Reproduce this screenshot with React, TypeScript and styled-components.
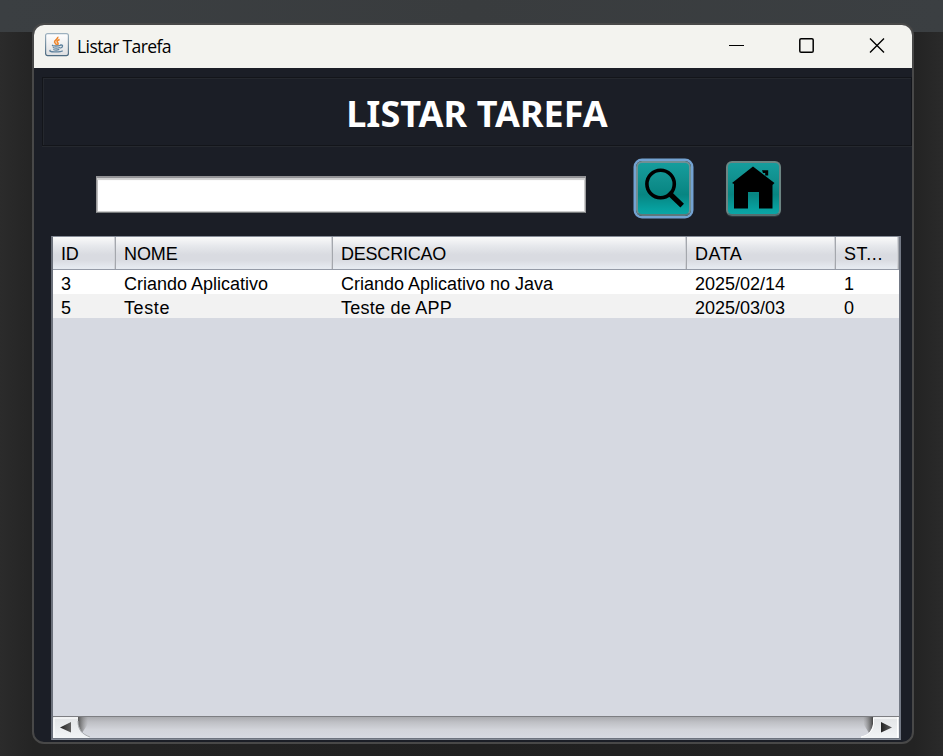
import React from 'react';
import styled, { createGlobalStyle } from 'styled-components';

const GlobalStyle = createGlobalStyle`
  * { box-sizing: border-box; }
  body { margin: 0; overflow: hidden; background: #272727; }
`;

const Desktop = styled.div`
  width: 943px;
  height: 756px;
  padding: 23px 0 0 32px;
  overflow: hidden;
  background-image:
    linear-gradient(90deg, #3b3f42, #393c3e 50%, #3b3f42),
    linear-gradient(90deg, #2b2b2b 0, #242424 34px, #202020 50%, #232323 914px, #2a2a2a 943px);
  background-size: 100% 32px, 100% 100%;
  background-repeat: no-repeat;
`;

const Window = styled.main`
  width: 882px;
  height: 721px;
  display: flex;
  flex-direction: column;
  border: 2px solid #484848;
  border-radius: 12px;
  overflow: hidden;
  background: #1b1e26;
`;

const TitleBar = styled.header`
  height: 43px;
  flex: none;
  display: flex;
  align-items: center;
  padding: 0 26px 4px 11px;
  background: #f3f3ef;
`;

const WindowTitle = styled.span`
  flex: 1;
  margin-left: 8px;
  padding-top: 2px;
  color: #000;
  font: 17.6px/24px 'Open Sans', 'Noto Sans', sans-serif;
  letter-spacing: -0.62px;
`;

const WindowControls = styled.div`
  display: flex;
  gap: 55px;
  padding-top: 1px;
  svg { display: block; }
  svg:first-child { margin-right: -1px; }
`;

const Heading = styled.div`
  height: 69px;
  flex: none;
  margin: 9px 0 0 8px;
  display: flex;
  justify-content: center;
  border: 1px solid #13151a;
  border-right-color: #12141a;
  box-shadow: inset 1px 1px 0 #25282e, 0 1px 0 #25282e;
  h1 {
    margin: 0;
    color: #fff;
    font: bold 36px/71px 'Noto Sans', 'Open Sans', sans-serif;
    letter-spacing: 0.05px;
    white-space: nowrap;
  }
`;

const SearchBar = styled.div`
  height: 90px;
  flex: none;
  display: flex;
  align-items: flex-start;
  padding: 13px 0 0 62px;
`;

const SearchInput = styled.input`
  width: 490px;
  height: 37px;
  margin: 17px 48px 0 0;
  padding: 4px 8px;
  border: 1px solid #9b9b9d;
  border-top: 2px solid #929295;
  border-bottom-color: #777a7b;
  border-radius: 0;
  outline: none;
  background: #fff;
  box-shadow: inset 0 2px 1px #cfcfcf, inset 1px 0 0 #bcbcbc, inset -1px 0 0 #ccc, inset 0 -1px 0 #ccc;
  font: 18px 'Liberation Sans', sans-serif;
`;

const ToolButton = styled.button<{ $focused?: boolean }>`
  width: 55px;
  height: 55px;
  margin: 2px 0 0 ${p => (p.$focused ? '2px' : '35px')};
  padding: 0;
  display: block;
  border: 2px solid ${p => (p.$focused ? '#708f94' : '#6c8583')};
  border-bottom-color: ${p => (p.$focused ? '#5d777c' : '#536e70')};
  border-radius: 6px;
  background: linear-gradient(#159d9d 0, #108f8d 35%, #078582 62%, #07a09f 90%, #0ba5a5);
  box-shadow: ${p => (p.$focused ? '0 0 0 2.5px #73a2d1' : '0 1px 1px #30383d')};
  svg { display: block; }
`;

const TableFrame = styled.section`
  width: 850px;
  height: 504px;
  flex: none;
  margin-left: 17px;
  display: flex;
  flex-direction: column;
  border: 1px solid #858b96;
  border-left: 2px solid #6c717b;
  border-right: 2px solid #737985;
  background: #d6d9e1;
`;

const columns = '63px 217px 354px 149px 63px';

const HeaderRow = styled.div`
  height: 33px;
  flex: none;
  display: grid;
  grid-template-columns: ${columns};
  border-bottom: 1px solid #959ba7;
  background: linear-gradient(#fafafa 0, #e5e7eb 30%, #d9dbe1 55%, #d9dbe1 72%, #e6eaf0 96%);
`;

const HeaderCell = styled.div<{ $spacing?: number }>`
  height: 32px;
  padding-left: 8px;
  border-right: 1px solid #a4a7ad;
  box-shadow: inset -1px 0 0 #d1d3d8;
  color: #000;
  font: 18px/35px 'Liberation Sans', Arial, sans-serif;
  letter-spacing: ${p => p.$spacing ?? 0}px;
  white-space: nowrap;
`;

const DataRow = styled.div<{ $striped: boolean }>`
  height: 24px;
  flex: none;
  display: grid;
  grid-template-columns: ${columns};
  background: ${p => (p.$striped ? '#f2f2f2' : '#fff')};
`;

const DataCell = styled.div<{ $spacing?: number }>`
  height: 24px;
  padding-left: 8px;
  color: #000;
  font: 18px/29px 'Liberation Sans', Arial, sans-serif;
  letter-spacing: ${p => p.$spacing ?? 0}px;
  white-space: nowrap;
`;

const EmptyArea = styled.div`
  flex: 1;
`;

const ScrollBar = styled.div`
  height: 23px;
  flex: none;
  border-top: 1px solid #7d7e82;
  border-bottom: 1px solid #6d737e;
  background: linear-gradient(#a9aaae, #bfc0c5 25%, #d2d4da 60%, #d6d9e1);
  display: flex;
  justify-content: space-between;
  svg { display: block; }
`;

const headers = [
  { label: 'ID', spacing: -0.3 },
  { label: 'NOME', spacing: -0.1 },
  { label: 'DESCRICAO', spacing: -0.22 },
  { label: 'DATA', spacing: 0.5 },
  { label: 'ST...', spacing: 0.6 },
];

const rows = [
  [{ text: '3' }, { text: 'Criando Aplicativo' }, { text: 'Criando Aplicativo no Java' }, { text: '2025/02/14' }, { text: '1' }],
  [{ text: '5' }, { text: 'Teste', spacing: 0.6 }, { text: 'Teste de APP', spacing: 0.25 }, { text: '2025/03/03' }, { text: '0' }],
];

const JavaIcon = () => (
  <svg width="24" height="24" viewBox="0 0 24 24" fill="none">
    <defs>
      <linearGradient id="javaFrame" x2="0" y2="1">
        <stop stopColor="#9db1bf" /><stop offset="1" stopColor="#4e6c82" />
      </linearGradient>
      <linearGradient id="javaFace" x2="0" y2="1">
        <stop stopColor="#fff" /><stop offset="1" stopColor="#dedfe1" />
      </linearGradient>
    </defs>
    <rect x=".6" y=".6" width="22.8" height="22" rx="2" fill="url(#javaFace)" stroke="url(#javaFrame)" strokeWidth="1.2" />
    <path d="M12.8 3.8c.8 2.4-3.8 3-3.2 5.3.3 1.1 1.7 1.8 1.8 2.8M14.6 6.4c-3 1.2-3.1 2.3-1.8 3.5.6.6.2 1.4-.5 2" stroke="#ef862c" strokeWidth="1.6" />
    <path d="M8 12c-2.5 1 4 1.5 7.5.3M15 12.2c3.5-1 3.3 2.3.2 3M7.8 14.5c1.8.8 5.2.7 7.2 0M8.3 16.5c1.7.7 4.3.6 6-.1M5.5 17c-4 2.3 10 2.4 12.2.7" stroke="#5d819d" strokeWidth="1.3" />
  </svg>
);

const SearchIcon = () => (
  <svg width="51" height="51" viewBox="0 0 51 51" fill="none" stroke="#000">
    <circle cx="22.6" cy="21" r="13.7" strokeWidth="3.6" />
    <path d="M32.5 31.5 42.3 40.8" strokeWidth="5.2" strokeLinecap="square" />
  </svg>
);

const HomeIcon = () => (
  <svg width="51" height="51" viewBox="0 0 51 51">
    <path d="M4 20 25 3.5 46.5 20 44.5 22V45.5H31V29H20V45.5H6V21Z" />
    <path d="M34 7.2H40.2V12.5H37.2V10H35Z" />
  </svg>
);

const ArrowLeft = () => (
  <svg width="38" height="21" viewBox="0 0 38 21">
    <defs>
      <linearGradient id="leftFace" x2="0" y2="1"><stop stopColor="#e2e4e6" /><stop offset="1" stopColor="#f2f4f6" /></linearGradient>
      <linearGradient id="leftArrow"><stop stopColor="#222" /><stop offset="1" stopColor="#606060" /></linearGradient>
      <linearGradient id="leftShade"><stop stopColor="#555" /><stop offset="1" stopColor="#888" stopOpacity="0" /></linearGradient>
    </defs>
    <path d="M25 0h10v7L29 16 25 8Z" fill="url(#leftShade)" />
    <path d="M0 0h25v7c1 7 4 10 12 13v1H0Z" fill="url(#leftFace)" />
    <path d="M25 4c0 9 4 13 12 16" fill="none" stroke="#a8abae" />
    <path d="M1 21V1H25" fill="none" stroke="#fff" />
    <path d="M7 10.5 18 5V15.5Z" fill="url(#leftArrow)" />
  </svg>
);

const ArrowRight = () => (
  <svg width="38" height="21" viewBox="0 0 38 21">
    <defs>
      <linearGradient id="rightFace" x2="0" y2="1"><stop stopColor="#e2e4e6" /><stop offset="1" stopColor="#f2f4f6" /></linearGradient>
      <linearGradient id="rightArrow"><stop stopColor="#222" /><stop offset="1" stopColor="#606060" /></linearGradient>
      <linearGradient id="rightShade"><stop stopColor="#888" stopOpacity="0" /><stop offset="1" stopColor="#444" /></linearGradient>
    </defs>
    <path d="M2 0h10v9L8 16 3 8Z" fill="url(#rightShade)" />
    <path d="M38 0H12v7C11 14 8 18 0 20v1h38Z" fill="url(#rightFace)" />
    <path d="M12.5 1v6C12 14 8 18 0 20" fill="none" stroke="#fff" />
    <path d="M36.5 0v21M38 1H13" fill="none" stroke="#fff" />
    <path d="M31 10.5 20 5V15.5Z" fill="url(#rightArrow)" />
  </svg>
);

export default function App() {
  return (
    <>
      <GlobalStyle />
      <Desktop>
        <Window>
          <TitleBar>
            <JavaIcon />
            <WindowTitle>Listar Tarefa</WindowTitle>
            <WindowControls>
              <svg width="16" height="16"><path d="M0 8.5h15" stroke="#000" /></svg>
              <svg width="15" height="16" fill="none"><rect x=".8" y="1.8" width="13.4" height="13.4" rx="1.3" stroke="#000" strokeWidth="1.5" /></svg>
              <svg width="17" height="16"><path d="m1 1.5 14 14m0-14-14 14" stroke="#000" strokeWidth="1.4" /></svg>
            </WindowControls>
          </TitleBar>
          <Heading><h1>LISTAR TAREFA</h1></Heading>
          <SearchBar>
            <SearchInput aria-label="Pesquisar tarefa" />
            <ToolButton $focused aria-label="Pesquisar"><SearchIcon /></ToolButton>
            <ToolButton aria-label="Início"><HomeIcon /></ToolButton>
          </SearchBar>
          <TableFrame>
            <HeaderRow>
              {headers.map(h => <HeaderCell key={h.label} $spacing={h.spacing}>{h.label}</HeaderCell>)}
            </HeaderRow>
            {rows.map((row, i) => (
              <DataRow key={row[0].text} $striped={i % 2 === 1}>
                {row.map((cell, j) => <DataCell key={j} $spacing={cell.spacing}>{cell.text}</DataCell>)}
              </DataRow>
            ))}
            <EmptyArea />
            <ScrollBar><ArrowLeft /><ArrowRight /></ScrollBar>
          </TableFrame>
        </Window>
      </Desktop>
    </>
  );
}
